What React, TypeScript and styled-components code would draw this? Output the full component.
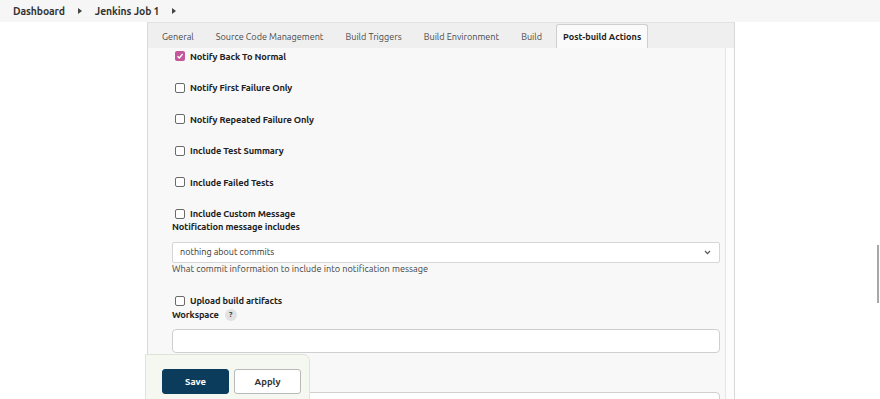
import React from 'react';
import styled, { createGlobalStyle } from 'styled-components';

const GlobalStyle = createGlobalStyle`
  body {
    margin: 0;
    background: #ffffff;
    font-family: Ubuntu, Lato, "Noto Sans", sans-serif;
    color: #222;
    overflow: hidden;
  }
`;

const Page = styled.div`
  position: relative;
  width: 880px;
  height: 399px;
  overflow: hidden;
`;

const TopBar = styled.div`
  display: flex;
  align-items: center;
  height: 22px;
  padding-left: 13px;
  background: #f6f6f6;
  gap: 12px;
`;

const Crumb = styled.span`
  font-size: 10.4px;
  font-weight: 700;
  letter-spacing: -0.1px;
  color: #333;
`;

const CrumbArrow = styled.span`
  width: 0;
  height: 0;
  border-top: 3px solid transparent;
  border-bottom: 3px solid transparent;
  border-left: 4px solid #444;
  margin: 0 1px;
`;

const Panel = styled.div`
  margin-left: 147px;
  width: 586px;
  border-left: 1px solid #d8d8d8;
  border-right: 1px solid #d8d8d8;
  border-top: 1px solid #e2e2e2;
`;

const TabStrip = styled.div`
  display: flex;
  align-items: flex-end;
  height: 25px;
  padding-left: 3px;
  background: #efefef;
`;

const Tab = styled.div<{ $active?: boolean }>`
  display: flex;
  align-items: center;
  height: 23px;
  padding: 0 ${(p) => (p.$active ? '6px' : '10px')};
  font-size: 9.1px;
  font-weight: ${(p) => (p.$active ? 700 : 400)};
  color: ${(p) => (p.$active ? '#222' : '#4a4a4a')};
  background: ${(p) => (p.$active ? '#fafafa' : 'transparent')};
  border: 1px solid ${(p) => (p.$active ? '#cfcfcf' : 'transparent')};
  border-bottom: none;
  border-radius: 3px 3px 0 0;
  margin-left: ${(p) => (p.$active ? '3px' : '0')};
`;

const Frame = styled.div`
  display: flex;
`;

const Body = styled.div`
  flex: 1;
  background: #f8f8f8;
  padding: 1.5px 5px 0 24px;
  height: 360px;
`;

const Gutter = styled.div`
  width: 8px;
  background: #fcfcfc;
  border-left: 1px solid #e6e6e6;
`;

const CheckRow = styled.label<{ $gap?: number }>`
  display: flex;
  align-items: center;
  gap: 5px;
  height: 13px;
  margin-left: 3px;
  margin-top: ${(p) => p.$gap ?? 0}px;
  font-size: 9.3px;
  font-weight: 700;
  letter-spacing: -0.12px;
  color: #222;
`;

const Box = styled.span<{ $checked?: boolean }>`
  display: inline-flex;
  align-items: center;
  justify-content: center;
  box-sizing: border-box;
  width: 10px;
  height: 10px;
  border-radius: 2px;
  border: ${(p) => (p.$checked ? 'none' : '1.3px solid #6a6a6a')};
  background: ${(p) => (p.$checked ? '#c4569a' : '#fff')};
`;

const FieldLabel = styled.div<{ $gap?: number }>`
  display: flex;
  align-items: center;
  gap: 6px;
  height: 13px;
  margin-top: ${(p) => p.$gap ?? 0}px;
  font-size: 9.3px;
  font-weight: 700;
  letter-spacing: -0.12px;
  color: #222;
`;

const HelpDot = styled.span`
  display: inline-flex;
  align-items: center;
  justify-content: center;
  width: 12px;
  height: 12px;
  border-radius: 50%;
  background: #e2e2e2;
  font-size: 8px;
  font-weight: 700;
  color: #444;
`;

const Select = styled.div`
  display: flex;
  align-items: center;
  justify-content: space-between;
  box-sizing: border-box;
  height: 21px;
  margin-top: 8.5px;
  padding: 0 8px 0 7px;
  background: #fff;
  border: 1px solid #d6d6d6;
  border-radius: 2px;
  font-size: 9px;
  color: #333;
`;

const Hint = styled.div`
  height: 13px;
  margin-top: 0.5px;
  font-size: 9.2px;
  color: #444;
`;

const TextInput = styled.div<{ $gap?: number }>`
  box-sizing: border-box;
  height: 24px;
  margin-top: ${(p) => p.$gap ?? 0}px;
  background: #fff;
  border: 1px solid #cfcfcf;
  border-radius: 4px;
`;

const SaveBar = styled.div`
  position: absolute;
  left: 145px;
  top: 354px;
  display: flex;
  gap: 5px;
  box-sizing: border-box;
  width: 165px;
  height: 50px;
  padding: 14px 0 0 16px;
  background: #f5f8f1;
  border: 1px solid #dde5d6;
  border-radius: 0 7px 0 0;
`;

const Button = styled.button<{ $primary?: boolean }>`
  width: 67px;
  height: 25px;
  border-radius: 3px;
  font-family: inherit;
  font-size: 9.5px;
  font-weight: 700;
  cursor: pointer;
  color: ${(p) => (p.$primary ? '#fff' : '#333')};
  background: ${(p) => (p.$primary ? '#0b3c5c' : '#fff')};
  border: 1px solid ${(p) => (p.$primary ? '#0b3c5c' : '#b9b9b9')};
`;

const ScrollThumb = styled.div`
  position: absolute;
  left: 877px;
  top: 245px;
  width: 2px;
  height: 58px;
  background: #a8a8a8;
`;

const tabs = ['General', 'Source Code Management', 'Build Triggers', 'Build Environment', 'Build'];

const notify = [
  'Notify Back To Normal',
  'Notify First Failure Only',
  'Notify Repeated Failure Only',
  'Include Test Summary',
  'Include Failed Tests',
  'Include Custom Message',
];

const Check = ({ checked }: { checked?: boolean }) => (
  <Box $checked={checked}>
    {checked && (
      <svg width="8" height="8" viewBox="0 0 8 8">
        <path d="M1.5 4.2 L3.3 6 L6.6 2" fill="none" stroke="#fff" strokeWidth="1.3" />
      </svg>
    )}
  </Box>
);

export default function App() {
  return (
    <Page>
      <GlobalStyle />
      <TopBar>
        <Crumb>Dashboard</Crumb>
        <CrumbArrow />
        <Crumb>Jenkins Job 1</Crumb>
        <CrumbArrow />
      </TopBar>
      <Panel>
        <TabStrip>
          {tabs.map((t) => (
            <Tab key={t}>{t}</Tab>
          ))}
          <Tab $active>Post-build Actions</Tab>
        </TabStrip>
        <Frame>
          <Body>
            {notify.map((n, i) => (
              <CheckRow key={n} $gap={i === 0 ? 0 : 18.6}>
                <Check checked={i === 0} />
                {n}
              </CheckRow>
            ))}
            <FieldLabel>Notification message includes</FieldLabel>
            <Select>
              nothing about commits
              <svg width="7" height="5" viewBox="0 0 7 5">
                <path d="M1 1 L3.5 3.6 L6 1" fill="none" stroke="#555" strokeWidth="1.2" />
              </svg>
            </Select>
            <Hint>What commit information to include into notification message</Hint>
            <CheckRow $gap={18}>
              <Check />
              Upload build artifacts
            </CheckRow>
            <FieldLabel $gap={1}>
              Workspace <HelpDot>?</HelpDot>
            </FieldLabel>
            <TextInput $gap={7.5} />
            <TextInput $gap={39} />
          </Body>
          <Gutter />
        </Frame>
      </Panel>
      <SaveBar>
        <Button $primary>Save</Button>
        <Button>Apply</Button>
      </SaveBar>
      <ScrollThumb />
    </Page>
  );
}
